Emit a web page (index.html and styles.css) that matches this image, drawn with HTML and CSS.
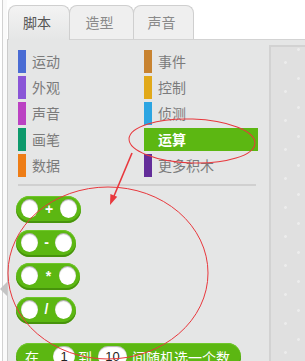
FILE: index.html
```html
<!DOCTYPE html>
<html lang="zh">
<head>
<meta charset="utf-8">
<link rel="stylesheet" href="styles.css">
</head>
<body>
<div class="app">
  <div class="strip"><span class="collapse"></span></div>
  <div class="main">
    <div class="tabs">
      <div class="tab active">脚本</div>
      <div class="tab t2">造型</div>
      <div class="tab t3">声音</div>
    </div>
    <div class="workspace">
      <div class="palette">
        <div class="cats">
          <div class="cat"><span class="bar motion"></span><span class="lbl">运动</span></div>
          <div class="cat"><span class="bar events"></span><span class="lbl">事件</span></div>
          <div class="cat"><span class="bar looks"></span><span class="lbl">外观</span></div>
          <div class="cat"><span class="bar control"></span><span class="lbl">控制</span></div>
          <div class="cat"><span class="bar sound"></span><span class="lbl">声音</span></div>
          <div class="cat"><span class="bar sensing"></span><span class="lbl">侦测</span></div>
          <div class="cat"><span class="bar pen"></span><span class="lbl">画笔</span></div>
          <div class="cat selected"><span class="bar ops"></span><span class="lbl">运算</span></div>
          <div class="cat"><span class="bar data"></span><span class="lbl">数据</span></div>
          <div class="cat"><span class="bar more"></span><span class="lbl">更多积木</span></div>
        </div>
        <div class="sep"></div>
        <div class="blocks">
          <div class="block"><span class="slot"></span><span class="op w22">+</span><span class="slot"></span></div>
          <div class="block"><span class="slot"></span><span class="op w17">-</span><span class="slot"></span></div>
          <div class="block"><span class="slot"></span><span class="op w21">*</span><span class="slot"></span></div>
          <div class="block"><span class="slot"></span><span class="op w17">/</span><span class="slot"></span></div>
          <div class="block long"><span class="txt t-zai">在</span><span class="num n1">1</span><span class="txt t-dao">到</span><span class="num n10">10</span><span class="txt">间随机选一个数</span></div>
        </div>
      </div>
      <div class="scripts"></div>
    </div>
  </div>
</div>
<svg class="marks" width="305" height="361" viewBox="0 0 305 361">
  <ellipse cx="192" cy="141" rx="63" ry="22" transform="rotate(2 192 141)" fill="none" stroke="#e8383d" stroke-width="1"/>
  <ellipse cx="108" cy="273" rx="100" ry="86" fill="none" stroke="#e8383d" stroke-width="1"/>
  <line x1="132" y1="153" x2="114" y2="196" stroke="#e8383d" stroke-width="1.6"/>
  <polygon points="110,205 117.2,196.8 110.4,194" fill="#e8383d"/>
</svg>
</body>
</html>
```
FILE: styles.css
```css
html, body {
  margin: 0;
  padding: 0;
}
body {
  width: 305px;
  height: 361px;
  overflow: hidden;
  background: #fff;
  font-family: "Noto Sans CJK SC", "Noto Sans", sans-serif;
  position: relative;
}
.app {
  display: flex;
  height: 361px;
}
.strip {
  width: 7px;
  flex: none;
  background: linear-gradient(to right, #fff 2px, #d2d2d2 2px, #d2d2d2 3px, #fafafa 3px);
  padding-top: 282px;
  box-sizing: border-box;
}
.collapse {
  display: block;
  width: 0;
  height: 0;
  border-top: 7px solid transparent;
  border-bottom: 7px solid transparent;
  border-right: 7px solid #c4c4c4;
}
.main {
  flex: 1;
  display: flex;
  flex-direction: column;
  min-width: 0;
}
.tabs {
  display: flex;
  height: 39px;
  padding-top: 5px;
  padding-left: 1px;
  box-sizing: border-box;
  position: relative;
  z-index: 2;
}
.tab {
  height: 34px;
  box-sizing: border-box;
  border: 1px solid #cfcfcf;
  border-bottom: none;
  border-radius: 8px 8px 0 0;
  background: #efefef;
  color: #8a8a8a;
  font-size: 14px;
  line-height: 32px;
  text-align: center;
  padding-right: 4px;
}
.tab.active {
  width: 62px;
  height: 35px;
  margin-bottom: -1px;
  color: #555;
  background: linear-gradient(#f3f3f3, #e5e6e6);
}
.tab.t2 {
  width: 65px;
  margin-left: -1px;
}
.tab.t3 {
  width: 61px;
  margin-left: -1px;
}
.workspace {
  flex: 1;
  display: flex;
  background: #e5e6e6;
  border-top: 1px solid #d3d3d3;
  border-left: 1px solid #cbcbcb;
  min-height: 0;
}
.palette {
  width: 261px;
  flex: none;
  padding: 10px 0 0 10px;
  box-sizing: border-box;
}
.cats {
  display: grid;
  grid-template-columns: 114px 114px;
  grid-auto-rows: 23px;
  column-gap: 12px;
  row-gap: 3px;
}
.cat {
  display: flex;
  align-items: center;
}
.bar {
  width: 8px;
  align-self: stretch;
  flex: none;
}
.lbl {
  margin-left: 6px;
  font-size: 14px;
  color: #7b7b7b;
  line-height: 23px;
}
.motion { background: #4a6cd4; }
.looks { background: #8a55d7; }
.sound { background: #bb42c3; }
.pen { background: #0e9a6c; }
.data { background: #ee7d16; }
.events { background: #c88330; }
.control { background: #e1a91a; }
.sensing { background: #2ca5e2; }
.ops { background: #5cb712; }
.more { background: #632d99; }
.cat.selected {
  background: #5cb712;
}
.cat.selected .lbl {
  color: #fff;
  font-weight: bold;
}
.sep {
  width: 238px;
  height: 0;
  border-top: 2px solid #d0d0d0;
  margin-top: 7px;
}
.blocks {
  display: flex;
  flex-direction: column;
  align-items: flex-start;
  gap: 6.5px;
  margin-top: 10px;
  margin-left: -2px;
}
.block {
  display: flex;
  align-items: center;
  height: 27px;
  box-sizing: border-box;
  padding: 0 4px 2px 5px;
  border-radius: 14px;
  background: #5cb712;
  box-shadow: inset 0 -2px 0 #47930c, inset 0 1px 0 #6fc72a;
}
.slot {
  width: 17px;
  height: 19px;
  border-radius: 50%;
  background: #fff;
  box-shadow: inset 0 1px 1px rgba(0, 0, 0, 0.35);
}
.op {
  color: #fff;
  font-family: "Liberation Sans", sans-serif;
  font-weight: bold;
  font-size: 14px;
  text-align: center;
}
.w22 { width: 22px; }
.w21 { width: 21px; }
.w17 { width: 17px; }
.block.long {
  margin-top: 13px;
  padding-left: 9px;
  padding-right: 11px;
  align-items: flex-start;
  padding-top: 3px;
}
.txt {
  color: #fff;
  font-size: 14px;
  line-height: 22px;
}
.t-zai { margin-right: 14px; }
.t-dao { margin-left: 3px; margin-right: 6px; }
.num {
  height: 20px;
  border-radius: 10px;
  background: #fff;
  color: #222;
  font-family: "Liberation Sans", sans-serif;
  font-size: 13px;
  line-height: 21px;
  text-align: center;
  box-shadow: inset 0 1px 1px rgba(0, 0, 0, 0.3);
}
.n1 { width: 22px; }
.n10 { width: 29px; margin-right: 5px; }
.scripts {
  flex: 1;
  margin-top: 5px;
  border-top: 2px solid #d2d2d2;
  border-left: 2px solid #d2d2d2;
  background-color: #e0e0e0;
  background-image:
    radial-gradient(circle, #ececec 1.2px, transparent 1.6px),
    radial-gradient(circle, #ececec 1.2px, transparent 1.6px);
  background-size: 29px 29px, 29px 29px;
  background-position: 0px 1px, 13px -12px;
}
.marks {
  position: absolute;
  left: 0;
  top: 0;
  pointer-events: none;
}
```
